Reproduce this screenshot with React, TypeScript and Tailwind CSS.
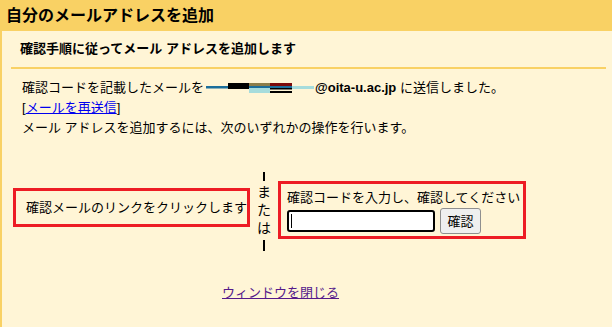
import React from "react";

function Redacted() {
  return (
    <svg width="108" height="10" viewBox="0 0 108 10" className="inline-block align-[-1px]">
      <rect x="0" y="3" width="22" height="2.5" fill="#1b6e9b" />
      <rect x="22" y="0" width="21" height="6" fill="#000" />
      <rect x="43" y="0" width="21" height="3" fill="#8b7d4a" />
      <rect x="43" y="3" width="21" height="2" fill="#1b6e9b" />
      <rect x="43" y="5" width="21" height="5" fill="#a6dcdc" />
      <rect x="64" y="0" width="22" height="3" fill="#7b0a0a" />
      <rect x="64" y="3" width="22" height="2" fill="#1b6e9b" />
      <rect x="64" y="5" width="22" height="1.5" fill="#000" />
      <rect x="64" y="8" width="22" height="2" fill="#000" />
      <rect x="86" y="3" width="22" height="3" fill="#a6dcdc" />
    </svg>
  );
}

export default function App() {
  return (
    <div
      className="w-[612px] h-[327px] overflow-hidden bg-[#fff5d6] text-black text-[13px]"
      style={{ fontFamily: '"Liberation Sans", "Noto Sans CJK JP", sans-serif' }}
    >
      <div className="h-[31px] bg-[#f9d164] pl-[6px] flex items-center text-[16px] font-bold leading-none">
        自分のメールアドレスを追加
      </div>
      <div className="border-l-2 border-[#f9d164] h-[296px] flex flex-col">
        <div className="h-[36px] flex items-center pl-[18px] font-bold">
          確認手順に従ってメール アドレスを追加します
        </div>
        <div className="ml-[9px] mr-[6px] h-[2px] bg-[#f9d164]" />
        <div className="pl-[20px] pt-[9px] leading-[20px]">
          <div className="flex items-center">
            <span>確認コードを記載したメールを</span>
            <span className="ml-[2px] mr-[1px] flex items-center">
              <Redacted />
            </span>
            <span className="font-bold">@oita-u.ac.jp</span>
            <span>&nbsp;に送信しました。</span>
          </div>
          <div>
            [<a href="#" className="text-[#0000ee] underline">メールを再送信</a>]
          </div>
          <div>メール アドレスを追加するには、次のいずれかの操作を行います。</div>
        </div>
        <div className="flex items-center ml-[11px] mt-[31px] h-[84px]">
          <div className="w-[237px] h-[39px] border-[3px] border-[#ed1c24] flex items-center pl-[10px] mt-[-7px]">
            確認メールのリンクをクリックします
          </div>
          <div className="w-[28px] flex flex-col items-center text-[14px] leading-[18px] mt-[0px]">
            <div className="w-[1.5px] h-[9px] bg-black mb-[2px]" />
            <div>ま</div>
            <div>た</div>
            <div>は</div>
            <div className="w-[1.5px] h-[11px] bg-black mt-[3px]" />
          </div>
          <div className="w-[248px] h-[58px] border-[3px] border-[#ed1c24] pl-[6px] pt-[5px] mt-[-2px]">
            <div className="leading-[18px]">確認コードを入力し、確認してください</div>
            <div className="flex items-center mt-[1px]">
              <div className="w-[148px] h-[22px] border-2 border-black rounded-[3px] bg-white flex items-center pl-[2px]">
                <div className="w-[1px] h-[14px] bg-black" />
              </div>
              <button className="ml-[5px] w-[41px] h-[26px] bg-[#efefef] border border-[#8f8f8f] rounded-[3px] text-[13px] leading-none">
                確認
              </button>
            </div>
          </div>
        </div>
        <div className="pl-[220px] mt-[30px]">
          <a href="#" className="text-[#551a8b] underline">ウィンドウを閉じる</a>
        </div>
      </div>
    </div>
  );
}
